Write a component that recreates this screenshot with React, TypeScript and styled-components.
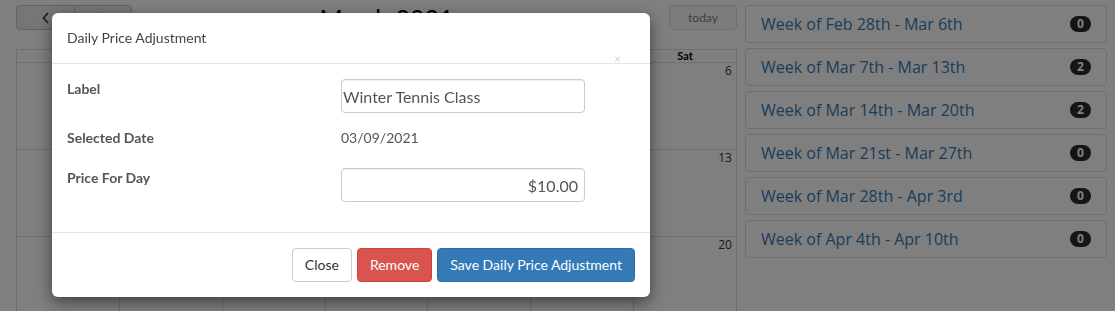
import React from "react";
import styled, { createGlobalStyle } from "styled-components";

const GlobalStyle = createGlobalStyle`
  html, body {
    margin: 0;
    padding: 0;
    overflow: hidden;
    background: #fff;
  }
  body {
    font-family: Lato, "Open Sans", sans-serif;
    font-size: 14px;
    color: #333;
  }
  * {
    box-sizing: border-box;
  }
`;

const Page = styled.div`
  display: flex;
  gap: 8px;
  height: 311px;
  padding: 5px 8px 0 16px;
`;

const CalendarWrap = styled.div`
  flex: 0 0 721px;
  display: flex;
  flex-direction: column;
`;

const Toolbar = styled.div`
  display: flex;
  align-items: flex-start;
  justify-content: space-between;
  height: 25px;
  margin-bottom: 19px;
`;

const ButtonGroup = styled.div`
  display: flex;
`;

const NavButton = styled.button<{ $side: "left" | "right" }>`
  width: ${(p) => (p.$side === "left" ? 59 : 58)}px;
  height: 25px;
  padding: 0;
  margin-left: ${(p) => (p.$side === "left" ? 0 : -1)}px;
  border: 1px solid #c4c4c4;
  border-radius: ${(p) => (p.$side === "left" ? "4px 0 0 4px" : "0 4px 4px 0")};
  background: #ececec;
  color: #333;
  display: flex;
  align-items: center;
  justify-content: center;
`;

const Title = styled.h2`
  margin: 1px 28px 0 0;
  font-family: Lato, sans-serif;
  font-size: 25px;
  font-weight: 400;
  line-height: 25px;
  color: #000;
`;

const TodayButton = styled.button`
  width: 68px;
  height: 25px;
  border: 1px solid #ccc;
  border-radius: 4px;
  background: #f5f5f5;
  color: #333;
  opacity: 0.65;
  font-family: Lato, sans-serif;
  font-size: 12px;
`;

const Grid = styled.div`
  display: grid;
  grid-template-columns: repeat(7, 1fr);
  border-top: 1px solid #ddd;
  border-left: 1px solid #ddd;
`;

const HeadCell = styled.div`
  height: 13px;
  border-right: 1px solid #ddd;
  border-bottom: 1px solid #ddd;
  font-family: Lato, sans-serif;
  font-size: 11px;
  font-weight: 700;
  line-height: 12px;
  text-align: center;
  color: #000;
`;

const DayCell = styled.div<{ $muted?: boolean }>`
  height: 87px;
  border-right: 1px solid #ddd;
  border-bottom: 1px solid #ddd;
  padding: 1px 4px;
  text-align: right;
  font-family: "Open Sans", sans-serif;
  font-size: 12px;
  line-height: 14px;
  color: ${(p) => (p.$muted ? "#aaa" : "#333")};
`;

const WeekList = styled.div`
  flex: 1;
  display: flex;
  flex-direction: column;
  gap: 5px;
`;

const WeekItem = styled.div`
  height: 38px;
  display: flex;
  align-items: center;
  justify-content: space-between;
  padding: 0 15px;
  border: 1px solid #ddd;
  border-radius: 4px;
  background: #fff;
  font-family: "Open Sans", sans-serif;
  font-size: 16px;
  color: #337ab7;
`;

const Badge = styled.span`
  min-width: 21px;
  height: 16px;
  padding: 0 6px;
  border-radius: 8px;
  background: #2a2a2a;
  color: #fff;
  font-family: "Open Sans", sans-serif;
  font-size: 12px;
  font-weight: 700;
  line-height: 16px;
  text-align: center;
`;

const Overlay = styled.div`
  position: fixed;
  inset: 0;
  background: rgba(0, 0, 0, 0.5);
  padding: 13px 0 0 52px;
`;

const Modal = styled.div`
  width: 598px;
  background: #fff;
  border-radius: 6px;
  box-shadow: 0 5px 15px rgba(0, 0, 0, 0.5);
  font-family: Lato, sans-serif;
`;

const ModalHeader = styled.div`
  display: flex;
  align-items: flex-start;
  padding: 15px;
  border-bottom: 1px solid #e5e5e5;
`;

const ModalTitle = styled.div`
  flex: 1;
  font-size: 14px;
  line-height: 20px;
  color: #444;
`;

const CloseX = styled.span`
  align-self: flex-end;
  margin: 0 14px -16px 0;
  font-size: 12px;
  line-height: 10px;
  color: #000;
  opacity: 0.2;
`;

const ModalBody = styled.div`
  display: flow-root;
  padding: 15px;
`;

const FormRow = styled.div<{ $min?: number }>`
  display: grid;
  grid-template-columns: 274px 244px;
  align-items: start;
  min-height: ${(p) => p.$min || 0}px;
  margin-bottom: 15px;
`;

const FieldLabel = styled.div`
  font-size: 14px;
  font-weight: 700;
  line-height: 20px;
  color: #555;
`;

const FieldValue = styled.div`
  font-size: 14px;
  line-height: 20px;
  color: #555;
`;

const Input = styled.input<{ $align?: "left" | "right" }>`
  width: 244px;
  height: 34px;
  padding: 0 6px 0 1px;
  border: 1px solid #ccc;
  border-radius: 4px;
  box-shadow: inset 0 1px 1px rgba(0, 0, 0, 0.075);
  font-family: Lato, sans-serif;
  font-size: 16px;
  color: #555;
  text-align: ${(p) => p.$align || "left"};
  outline: none;
`;

const ModalFooter = styled.div`
  display: flex;
  justify-content: flex-end;
  gap: 5px;
  padding: 15px;
  border-top: 1px solid #e5e5e5;
`;

const tones = {
  default: { bg: "#fff", border: "#ccc", color: "#333" },
  danger: { bg: "#d9534f", border: "#d43f3a", color: "#fff" },
  primary: { bg: "#337ab7", border: "#2e6da4", color: "#fff" },
};

const Button = styled.button<{ $tone: keyof typeof tones }>`
  height: 34px;
  padding: 0 12px;
  border: 1px solid ${(p) => tones[p.$tone].border};
  border-radius: 4px;
  background: ${(p) => tones[p.$tone].bg};
  color: ${(p) => tones[p.$tone].color};
  font-family: Lato, sans-serif;
  font-size: 14px;
  line-height: 20px;
`;

const Chevron = ({ dir }: { dir: "left" | "right" }) => (
  <svg width="8" height="12" viewBox="0 0 8 12">
    <path
      d={dir === "left" ? "M6 1L1.5 6L6 11" : "M2 1L6.5 6L2 11"}
      fill="none"
      stroke="#333"
      strokeWidth="1.6"
    />
  </svg>
);

const days = ["Sun", "Mon", "Tue", "Wed", "Thu", "Fri", "Sat"];

const weeks: { d: number; m?: boolean }[][] = [
  [{ d: 28, m: true }, { d: 1 }, { d: 2 }, { d: 3 }, { d: 4 }, { d: 5 }, { d: 6 }],
  [7, 8, 9, 10, 11, 12, 13].map((d) => ({ d })),
  [14, 15, 16, 17, 18, 19, 20].map((d) => ({ d })),
];

const weekList = [
  { label: "Week of Feb 28th - Mar 6th", count: 0 },
  { label: "Week of Mar 7th - Mar 13th", count: 2 },
  { label: "Week of Mar 14th - Mar 20th", count: 2 },
  { label: "Week of Mar 21st - Mar 27th", count: 0 },
  { label: "Week of Mar 28th - Apr 3rd", count: 0 },
  { label: "Week of Apr 4th - Apr 10th", count: 0 },
];

export default function App() {
  return (
    <>
      <GlobalStyle />
      <Page>
        <CalendarWrap>
          <Toolbar>
            <ButtonGroup>
              <NavButton $side="left">
                <Chevron dir="left" />
              </NavButton>
              <NavButton $side="right">
                <Chevron dir="right" />
              </NavButton>
            </ButtonGroup>
            <Title>March 2021</Title>
            <TodayButton disabled>today</TodayButton>
          </Toolbar>
          <Grid>
            {days.map((d) => (
              <HeadCell key={d}>{d}</HeadCell>
            ))}
            {weeks.map((w, i) =>
              w.map((c, j) => (
                <DayCell key={`${i}-${j}`} $muted={c.m}>
                  {c.d}
                </DayCell>
              ))
            )}
          </Grid>
        </CalendarWrap>
        <WeekList>
          {weekList.map((w) => (
            <WeekItem key={w.label}>
              <span>{w.label}</span>
              <Badge>{w.count}</Badge>
            </WeekItem>
          ))}
        </WeekList>
      </Page>
      <Overlay>
        <Modal>
          <ModalHeader>
            <ModalTitle>Daily Price Adjustment</ModalTitle>
            <CloseX>×</CloseX>
          </ModalHeader>
          <ModalBody>
            <FormRow>
              <FieldLabel>Label</FieldLabel>
              <Input defaultValue="Winter Tennis Class" />
            </FormRow>
            <FormRow $min={25}>
              <FieldLabel>Selected Date</FieldLabel>
              <FieldValue>03/09/2021</FieldValue>
            </FormRow>
            <FormRow>
              <FieldLabel>Price For Day</FieldLabel>
              <Input $align="right" defaultValue="$10.00" />
            </FormRow>
          </ModalBody>
          <ModalFooter>
            <Button $tone="default">Close</Button>
            <Button $tone="danger">Remove</Button>
            <Button $tone="primary">Save Daily Price Adjustment</Button>
          </ModalFooter>
        </Modal>
      </Overlay>
    </>
  );
}
